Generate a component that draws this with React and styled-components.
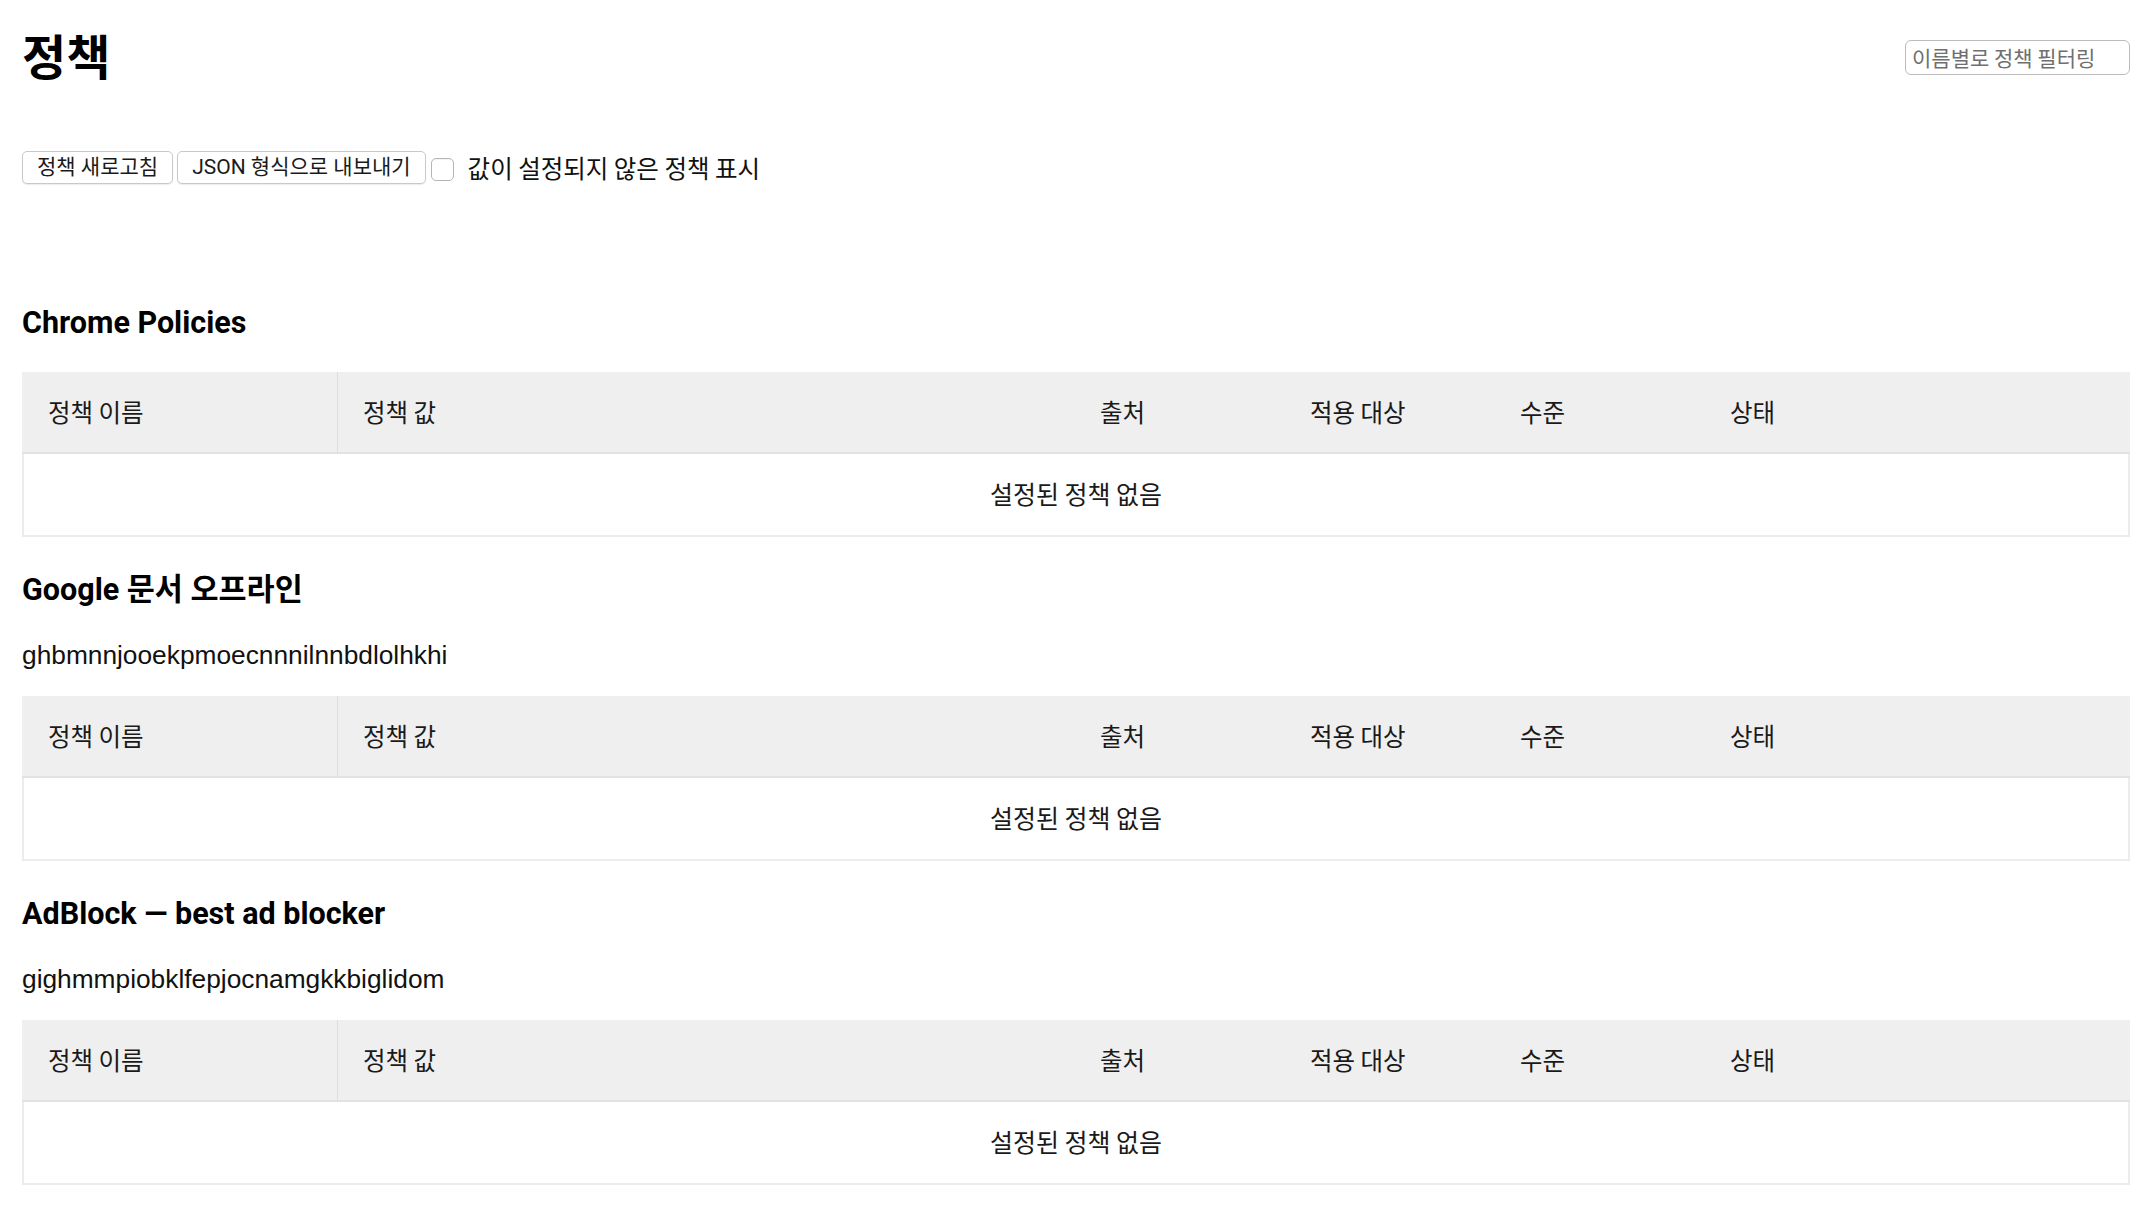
import React from 'react';
import styled, { createGlobalStyle } from 'styled-components';

const GlobalStyle = createGlobalStyle`
  body {
    margin: 0;
    background: #fff;
    color: #000;
    font-family: Roboto, 'Noto Sans CJK KR', sans-serif;
  }
`;

const Page = styled.div`
  padding: 0 18px 40px 22px;
`;

const Header = styled.header`
  display: flex;
  justify-content: space-between;
  align-items: center;
  height: 70px;
  padding-top: 20px;
`;

const Title = styled.h1`
  margin: 0;
  font-family: 'Noto Sans CJK KR', sans-serif;
  font-size: 48px;
  font-weight: 700;
  line-height: 70px;
  margin-top: -2px;
`;

const FilterInput = styled.input`
  box-sizing: border-box;
  width: 225px;
  height: 35px;
  margin-bottom: -4px;
  padding: 0 6px;
  border: 1px solid #bcbcbc;
  border-radius: 6px;
  font-family: 'Noto Sans CJK KR', sans-serif;
  font-size: 21px;
  color: #222;
  outline: none;

  &::placeholder {
    color: #6f6f6f;
  }
`;

const Toolbar = styled.div`
  display: flex;
  align-items: center;
  gap: 4px;
  height: 32px;
  margin-top: 61px;
`;

const Button = styled.button`
  height: 33px;
  padding: 0 14px;
  border: 1px solid #c9c9c9;
  border-radius: 5px;
  background: #fff;
  box-shadow: 0 1px 1px rgba(0, 0, 0, 0.08);
  font-family: Roboto, 'Noto Sans CJK KR', sans-serif;
  font-size: 21px;
  color: #1a1a1a;
  line-height: 1;
`;

const CheckLabel = styled.label`
  display: flex;
  align-items: center;
  height: 32px;
  margin-left: 1px;
  padding-top: 2px;
  font-family: 'Noto Sans CJK KR', sans-serif;
  font-size: 24.5px;
  line-height: 32px;
  color: #111;
`;

const CheckBox = styled.span`
  box-sizing: border-box;
  width: 23px;
  height: 23px;
  margin-top: 2px;
  margin-right: 14px;
  border: 1px solid #b5b5b5;
  border-radius: 5px;
  background: #fff;
  box-shadow: inset 0 1px 1px rgba(0, 0, 0, 0.05);
`;

const Section = styled.section`
  margin-top: ${(p) => (p.$first ? '122px' : '35px')};
`;

const Heading = styled.h2`
  margin: 0 0 ${(p) => (p.$tight ? '32px' : '31px')};
  font-family: Roboto, 'Noto Sans CJK KR', sans-serif;
  font-size: 30.5px;
  font-weight: 700;
  line-height: 36px;
`;

const ExtensionId = styled.div`
  margin-bottom: 26px;
  font-family: 'Liberation Sans', Arial, sans-serif;
  font-size: 26.3px;
  line-height: 30px;
  color: #111;
`;

const Columns = `
  display: grid;
  grid-template-columns: 316px 1fr repeat(4, 210px) 215px;
`;

const HeadRow = styled.div`
  ${Columns};
  box-sizing: border-box;
  height: 82px;
  background: #efefef;
  border-bottom: 2px solid #e2e2e2;
`;

const HeadCell = styled.div`
  display: flex;
  align-items: center;
  padding-left: ${(p) => (p.$first ? '26px' : '25px')};
  padding-bottom: 2px;
  font-family: 'Noto Sans CJK KR', sans-serif;
  font-size: 24.5px;
  color: #1a1a1a;
  border-right: ${(p) => (p.$first ? '1px solid #dedede' : 'none')};
`;

const EmptyRow = styled.div`
  box-sizing: border-box;
  height: 83px;
  padding-bottom: 3px;
  display: flex;
  align-items: center;
  justify-content: center;
  border: 2px solid #ececec;
  border-top: none;
  font-family: 'Noto Sans CJK KR', sans-serif;
  font-size: 25px;
  color: #1a1a1a;
`;

const columns = ['정책 이름', '정책 값', '출처', '적용 대상', '수준', '상태', ''];

const PolicyTable = () => (
  <div>
    <HeadRow>
      {columns.map((c, i) => (
        <HeadCell key={i} $first={i === 0}>
          {c}
        </HeadCell>
      ))}
    </HeadRow>
    <EmptyRow>설정된 정책 없음</EmptyRow>
  </div>
);

const sections = [
  { name: 'Chrome Policies' },
  { name: 'Google 문서 오프라인', id: 'ghbmnnjooekpmoecnnnilnnbdlolhkhi' },
  { name: 'AdBlock — best ad blocker', id: 'gighmmpiobklfepjocnamgkkbiglidom' },
];

const App = () => {
  return (
    <Page>
      <GlobalStyle />
      <Header>
        <Title>정책</Title>
        <FilterInput type="search" placeholder="이름별로 정책 필터링" />
      </Header>
      <Toolbar>
        <Button>정책 새로고침</Button>
        <Button>JSON 형식으로 내보내기</Button>
        <CheckLabel>
          <CheckBox />
          값이 설정되지 않은 정책 표시
        </CheckLabel>
      </Toolbar>
      {sections.map((s, i) => (
        <Section key={s.name} $first={i === 0}>
          <Heading $tight={!!s.id}>{s.name}</Heading>
          {s.id && <ExtensionId>{s.id}</ExtensionId>}
          <PolicyTable />
        </Section>
      ))}
    </Page>
  );
};

export default App;
